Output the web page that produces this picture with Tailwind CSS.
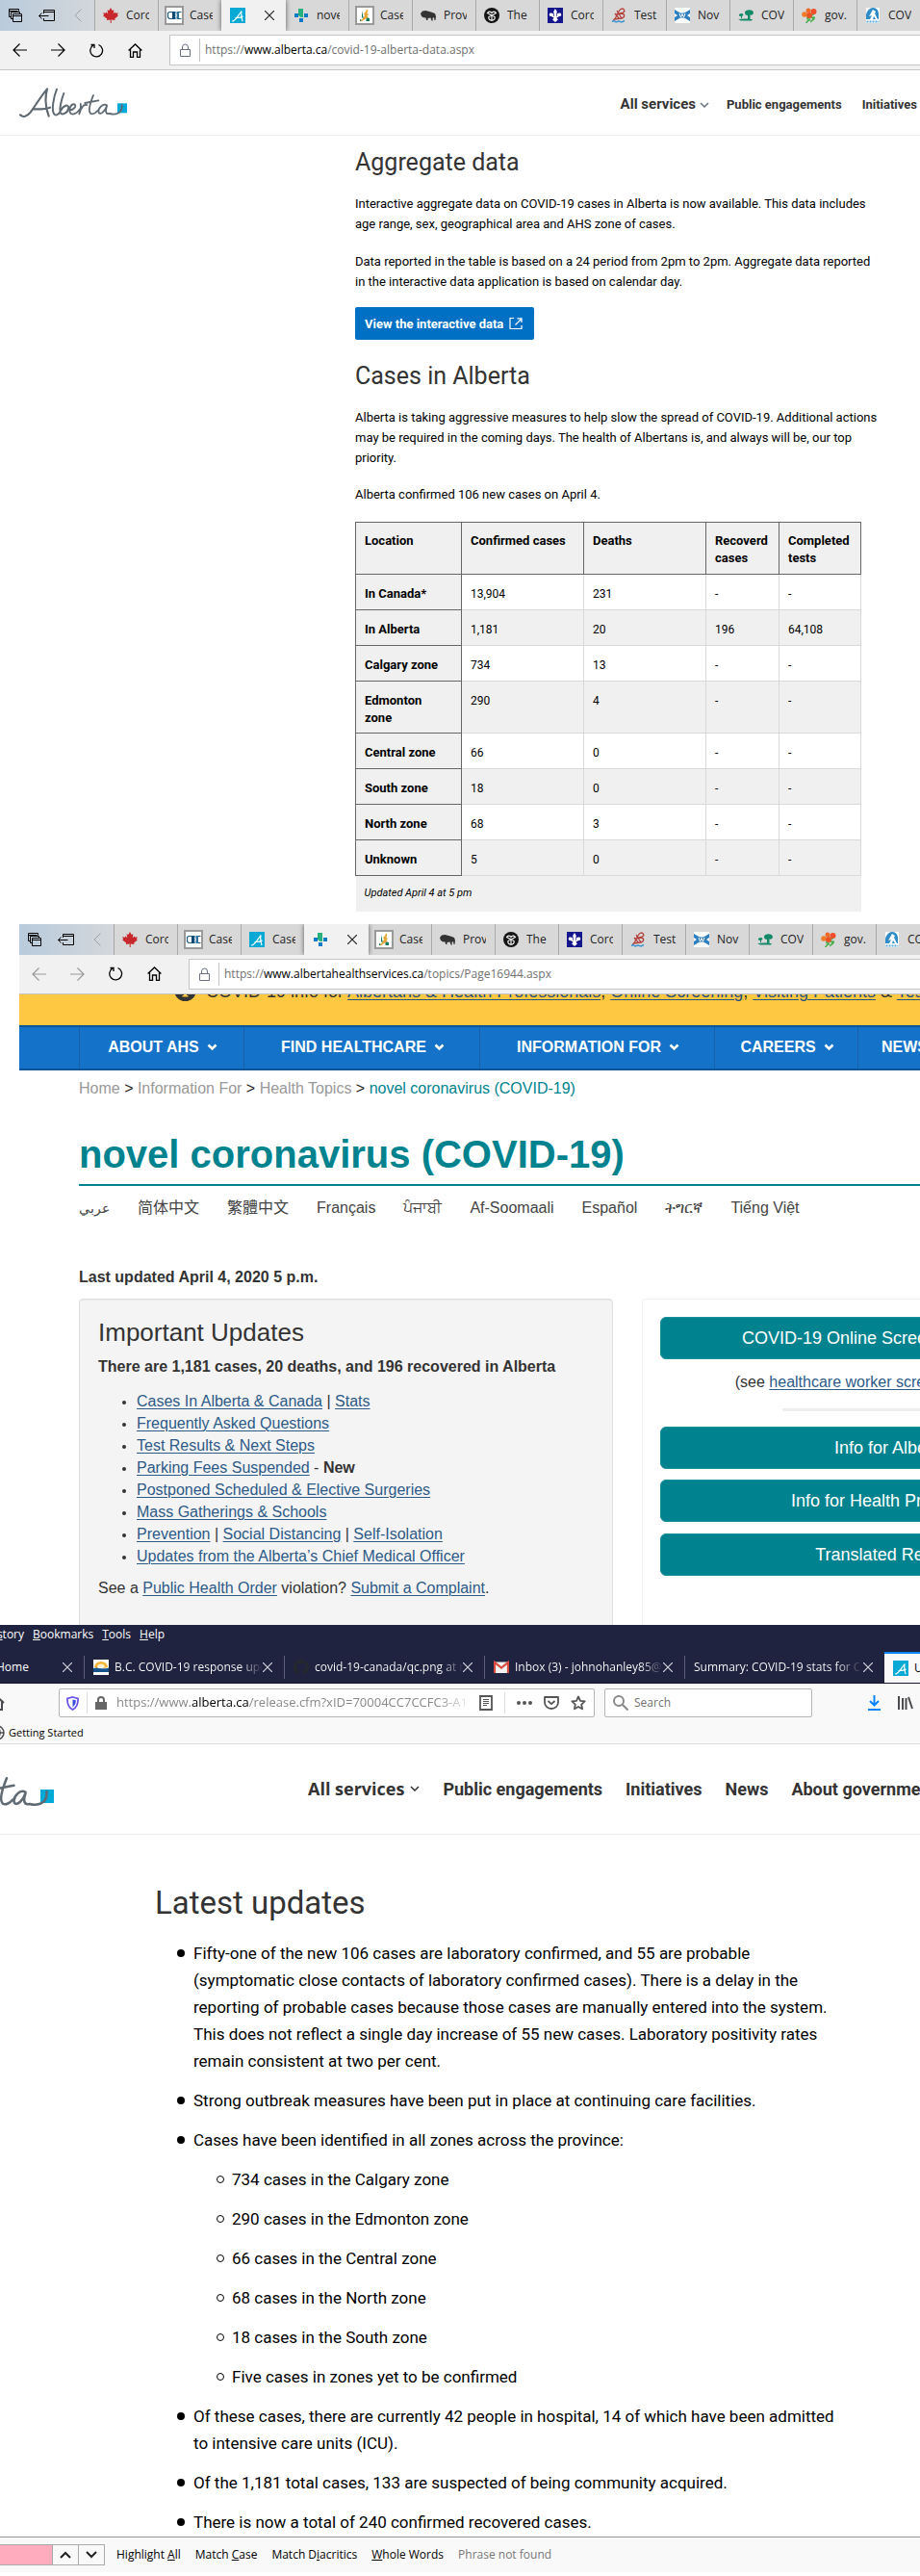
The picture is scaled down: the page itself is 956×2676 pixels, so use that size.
<!DOCTYPE html>
<html lang="en">
<head>
<meta charset="utf-8">
<meta name="viewport" content="width=device-width, initial-scale=1">
<title>Alberta COVID-19 data</title>
<script src="https://cdn.jsdelivr.net/npm/@tailwindcss/browser@4"></script>
</head>
<body class="bg-white text-black overflow-x-hidden">

<svg class="hidden" aria-hidden="true">
  <symbol id="i-stack" viewBox="0 0 14 14"><g fill="none" stroke="currentColor"><path d="M2.5 8.5h-2v-8h10v2M.5 2.5h9M4.500 10.500h-2v-7h9v2"/><path d="M4.500 5.500h9v8h-9zM4.500 7.500h9"/></g></symbol>
  <symbol id="i-aside" viewBox="0 0 17 12"><g fill="none" stroke="currentColor"><path d="M5.500 4V.5h11v11h-11V9M5.500 2.500h11M.5 6.500h10M3.500 3.500l-3 3 3 3"/></g></symbol>
  <symbol id="i-left" viewBox="0 0 8 14"><path d="M7.500.5L1 7l6.500 6.500" fill="none" stroke="currentColor"/></symbol>
  <symbol id="i-back" viewBox="0 0 15 14"><path d="M.8 7H15M7.500.5L1 7l6.500 6.500" fill="none" stroke="currentColor" stroke-width="1.200"/></symbol>
  <symbol id="i-fwd" viewBox="0 0 15 14"><path d="M14.200 7H0M7.500.5L14 7l-6.500 6.500" fill="none" stroke="currentColor" stroke-width="1.200"/></symbol>
  <symbol id="i-reload" viewBox="0 0 15 15"><path d="M9.500 1.500a6.400 6.400 0 1 1-5.500.4M1.500 1.500H5V5" fill="none" stroke="currentColor" stroke-width="1.300"/></symbol>
  <symbol id="i-home" viewBox="0 0 15 15"><path d="M.6 7.500L7.500 1l6.900 6.500M2.500 6v8.300h3V9h4v5.300h3V6" fill="none" stroke="currentColor" stroke-width="1.300"/></symbol>
  <symbol id="i-lock" viewBox="0 0 11 14"><path d="M.5 6.500h10v7H.5zM2.500 6.500V4a3 3 0 0 1 6 0v2.500" fill="none" stroke="currentColor"/></symbol>
  <symbol id="i-x" viewBox="0 0 10 10"><path d="M0 0l10 10M10 0L0 10" fill="none" stroke="currentColor" stroke-width="1.200"/></symbol>
  <symbol id="i-chev" viewBox="0 0 10 6"><path d="M1 1l4 4 4-4" fill="none" stroke="currentColor" stroke-width="1.500"/></symbol>
  <symbol id="i-chevb" viewBox="0 0 11 8"><path d="M1.500 1.500l4 4 4-4" fill="none" stroke="currentColor" stroke-width="2.600"/></symbol>
  <symbol id="f-leaf" viewBox="0 0 16 16"><path d="M8 0l1.700 3 1.700-.8-.6 4 2-1.700.6 1.200 2.400-.4-.8 2.300.8.8-3.600 3 .4 1.600-3.900-.5V16h-1v-3.500l-3.900.5.4-1.600L.2 8.400 1 7.600.2 5.300l2.400.4.600-1.200 2 1.700-.6-4 1.700.8z" fill="#c8282c"/></symbol>
  <symbol id="f-cdc" viewBox="0 0 20 20"><path d="M1 1h18v18H1z" fill="#fff" stroke="#9a9a9a" stroke-width="2"/><path d="M8 6.500H5L3.500 7.500v4.500L5 13.500h3M17.500 6.500H15M15 13.500h2.500" fill="none" stroke="#1d5d86" stroke-width="1.200"/><path d="M8 6h3.500v8H8z" fill="#0c4a78"/><path d="M12.500 6H15v8h-2.500z" fill="#2b6f9b"/><path d="M11 8l1.500 2-1.500 2" fill="none" stroke="#fff" stroke-width=".8"/></symbol>
  <symbol id="f-ab" viewBox="0 0 16 16"><path d="M0 0h16v16H0z" fill="#08a9d4"/><path d="M2 14c3.500.5 5.500-4.500 10-10.500-.6 3-.2 6 1 10.500M5.500 10.500c3 0 6 0 8-1.500" fill="none" stroke="#fff" stroke-width="1.200"/></symbol>
  <symbol id="f-ahs" viewBox="0 0 16 16"><path d="M5 1h5v9H7.500L5 8z" fill="#27b27b"/><path d="M1 6h4v4H1zM11 6h4v4h-4zM6 11h4v4H6z" fill="#0c79c6"/></symbol>
  <symbol id="f-sask" viewBox="0 0 20 20"><path d="M1 1h18v18H1z" fill="#fff" stroke="#9a9a9a" stroke-width="2"/><path d="M7 5v7l2 2zM11.500 12l3.500 1v3h-3.500zM5 14l2 1v1H5z" fill="#14795a"/><path d="M6.500 16C10 13 12 8 12.500 4M9.500 9l2.500-3M9.500 12l4-3.500M8.500 14l4.500-3" fill="none" stroke="#e7a531" stroke-width="1.600"/></symbol>
  <symbol id="f-bison" viewBox="0 0 16 16"><path d="M0 6l2-2.500L5.500 3 11 4.500l4 1.500 1 3-.5 4h-1l-.5-3-1.500 1 .3 2.500h-1.300L10.500 10.500 7.500 11v2H6l-.5-2.500L3 10.200 1 9z" fill="#333"/></symbol>
  <symbol id="f-on" viewBox="0 0 16 16"><circle cx="8" cy="8" r="8" fill="#151515"/><g fill="none" stroke="#fff" stroke-width="1.100"><path d="M8 8L3.500 5.500a2.500 2.500 0 0 1 4.500 0 2.500 2.500 0 0 1 4.500 0L8 8v5a2.600 2.600 0 0 1-3-3.500L8 8l3 1.500A2.600 2.600 0 0 1 8 13"/></g></symbol>
  <symbol id="f-qc" viewBox="0 0 16 16"><path d="M0 0h16v16H0z" fill="#15158c"/><path d="M8 1l1.800 3-1 5h.7c0-3 1.500-4 3.500-3.500s1.500 4-1 3.500L10.500 10H9.400l1.400 2.500L8 15l-2.800-2.500L6.600 10H5.500L4 9c-2.500.5-3-3-1-3.500S6.500 6 6.500 9h.7l-1-5z" fill="#fff"/></symbol>
  <symbol id="f-nb" viewBox="0 0 16 16"><path d="M2 13c4-1 4-10 9-12 3 0 4 3 1 4L5 7l6-1c3 0 4 4 0 5L3 12M6 3l5 8M4 6l4 5" fill="none" stroke="#b4413c" stroke-width="1.300"/><path d="M1 14.500l2-1 2 1.500 3-1 3 1 3-1.500" fill="none" stroke="#3d95cf" stroke-width="1.500"/></symbol>
  <symbol id="f-ns" viewBox="0 0 16 16"><path d="M0 0h16v16H0z" fill="#fff"/><path d="M0 2l6 3.500L10 5.500 16 2v4l-3 2 3 2v4l-6-3.500H6L0 14v-4l3-2-3-2z" fill="#2d7fc0"/><path d="M5 6l1.500 4L8 6.500 9.500 10 11 6" fill="none" stroke="#fff"/></symbol>
  <symbol id="f-pe" viewBox="0 0 16 16"><path d="M7 5c0-3 8-4 9 0 0 2-2 3-3.500 2.500V12h2.500l-1 1.500H3L0 12l6-.5H10V8C8 8 7 7 7 5zM1 7c2-1.500 4-1 4.500.5L4 9v2H3V9L1 8.500z" fill="#148a68"/></symbol>
  <symbol id="f-nl" viewBox="0 0 16 16"><path d="M14 4c1 3-7 4-4 6 2 1 4-1 3 1S9 14 10 15M9 8c-5 3-3 4-1 4 2 1-3 1-3 4" fill="none" stroke="#49ae4d" stroke-width="1.700"/><circle cx="7" cy="3" r="2.500" fill="#ef6b2b"/><circle cx="12.500" cy="4" r="3" fill="#ee4f2a"/><circle cx="3" cy="7" r="2.800" fill="#f07b2b"/><circle cx="8" cy="8" r="3" fill="#e85326"/></symbol>
  <symbol id="f-yk" viewBox="0 0 16 16"><path d="M1 0h14v16H1z" fill="#fff"/><path d="M1 12V7c1-4 4-7 7-7 4 0 6 3 6 7v5z" fill="#2e8bc8"/><path d="M8 2L4 9l3-1-2 4h3l1-3 2 3h2L10 6l1-2z" fill="#fff"/><path d="M1.500 14.500h13" stroke="#5aa7d8" stroke-width="2" stroke-dasharray="2 1"/></symbol>
  <symbol id="logo" viewBox="60 270 336 100">
    <path d="M366 321h30v30h-30z" fill="#00aad8"/>
    <g fill="none" stroke="#5f6a72" stroke-linecap="round" stroke-linejoin="round">
      <path stroke-width="6.500" d="M63 357c8 9 22 5 32-8 16-22 34-52 52-73-6 24-6 58 5 85M102 339c18 0 36 2 54-5"/>
      <path stroke-width="6" d="M177 277c-9 22-18 66-8 78 5 5 13 1 18-6M199 290c-8 20-14 48-11 60 6 10 24 0 26-15 0-11-16-10-24 8"/>
      <path stroke-width="5.500" d="M217 342c14 0 23-14 15-18-12-3-20 20-11 29 9 5 21-4 29-15M251 323c3 10 0 20-4 31 5-16 12-32 24-28"/>
      <path stroke-width="5.500" d="M291 296c-9 22-17 48-9 56 7 5 17-2 22-8M265 320l42-8M333 327c-12-8-29 11-25 23 5 9 20-5 25-21-6 18-3 27 9 24 18 5 40 0 38-27"/>
    </g>
  </symbol>
</svg>

<!-- First window: alberta.ca data page -->
<section class="overflow-hidden" style="font-family:Roboto,sans-serif">
  <div class="flex h-8 overflow-hidden bg-[#d8d8d8] text-[12px] text-[#222]" style="font-family:'Open Sans','Noto Sans',sans-serif">
    <div class="flex w-[98px] shrink-0 items-center bg-linear-to-r from-[#b9cbdc] to-[#d3d7db] pl-[9px] text-black">
      <button aria-label="Tab overview"><svg class="h-3.5 w-3.5"><use href="#i-stack"/></svg></button>
      <button aria-label="Set tabs aside" class="ml-[17px]"><svg class="h-3 w-[17px]"><use href="#i-aside"/></svg></button>
      <button aria-label="Scroll tabs left" class="ml-5 text-gray-400"><svg class="h-3.5 w-2"><use href="#i-left"/></svg></button>
    </div>
    <button class="flex w-[66px] shrink-0 items-center gap-2 border-l border-[#a9a9a9] px-2"><svg class="size-4 shrink-0"><use href="#f-leaf"/></svg><span class="w-6 overflow-hidden text-left">Coro</span></button>
    <button class="flex w-[66px] shrink-0 items-center gap-1.5 border-l border-[#a9a9a9] px-1.5"><svg class="size-5 shrink-0"><use href="#f-cdc"/></svg><span class="w-6 overflow-hidden text-left">Case</span></button>
    <div class="z-10 flex w-[67px] shrink-0 items-center gap-5 bg-[#f1f1f1] px-[9px] shadow-[0_0_5px_#555]"><svg class="size-4 shrink-0"><use href="#f-ab"/></svg><button aria-label="Close tab"><svg class="size-2.5"><use href="#i-x"/></svg></button></div>
    <button class="flex w-[65px] shrink-0 items-center gap-2 px-2"><svg class="size-4 shrink-0"><use href="#f-ahs"/></svg><span class="w-6 overflow-hidden text-left">nove</span></button>
    <button class="flex w-[66px] shrink-0 items-center gap-1.5 border-l border-[#a9a9a9] px-1.5"><svg class="size-5 shrink-0"><use href="#f-sask"/></svg><span class="w-6 overflow-hidden text-left">Case</span></button>
    <button class="flex w-[66px] shrink-0 items-center gap-2 border-l border-[#a9a9a9] px-2"><svg class="size-4 shrink-0"><use href="#f-bison"/></svg><span class="w-6 overflow-hidden text-left">Prov</span></button>
    <button class="flex w-[66px] shrink-0 items-center gap-2 border-l border-[#a9a9a9] px-2"><svg class="size-4 shrink-0"><use href="#f-on"/></svg><span class="w-6 overflow-hidden text-left">The</span></button>
    <button class="flex w-[66px] shrink-0 items-center gap-2 border-l border-[#a9a9a9] px-2"><svg class="size-4 shrink-0"><use href="#f-qc"/></svg><span class="w-6 overflow-hidden text-left">Coro</span></button>
    <button class="flex w-[66px] shrink-0 items-center gap-2 border-l border-[#a9a9a9] px-2"><svg class="size-4 shrink-0"><use href="#f-nb"/></svg><span class="w-6 overflow-hidden text-left">Test</span></button>
    <button class="flex w-[66px] shrink-0 items-center gap-2 border-l border-[#a9a9a9] px-2"><svg class="size-4 shrink-0"><use href="#f-ns"/></svg><span class="w-6 overflow-hidden text-left">Nov</span></button>
    <button class="flex w-[66px] shrink-0 items-center gap-2 border-l border-[#a9a9a9] px-2"><svg class="size-4 shrink-0"><use href="#f-pe"/></svg><span class="w-6 overflow-hidden text-left">COV</span></button>
    <button class="flex w-[66px] shrink-0 items-center gap-2 border-l border-[#a9a9a9] px-2"><svg class="size-4 shrink-0"><use href="#f-nl"/></svg><span class="w-6 overflow-hidden text-left">gov.</span></button>
    <button class="flex w-[66px] shrink-0 items-center gap-2 border-l border-[#a9a9a9] px-2"><svg class="size-4 shrink-0"><use href="#f-yk"/></svg><span class="w-6 overflow-hidden text-left">COV</span></button>
  </div>
  <div class="flex h-[41px] items-center border-b border-[#c5c5c5] bg-[#f1f1f1] pl-[13px]" style="font-family:'Open Sans','Noto Sans',sans-serif">
    <button aria-label="Back"><svg class="h-3.5 w-[15px]"><use href="#i-back"/></svg></button>
    <button aria-label="Forward" class="ml-[25px]"><svg class="h-3.5 w-[15px]"><use href="#i-fwd"/></svg></button>
    <button aria-label="Refresh" class="ml-[25px]"><svg class="size-[15px]"><use href="#i-reload"/></svg></button>
    <button aria-label="Home" class="ml-[25px]"><svg class="size-[15px]"><use href="#i-home"/></svg></button>
    <div class="ml-7 flex h-8 flex-1 items-center border border-r-0 border-[#c5c5c5] bg-white pl-2.5">
      <svg class="h-3.5 w-[11px] text-gray-500"><use href="#i-lock"/></svg>
      <div class="ml-[9px] h-6 border-l border-[#c5c5c5]"></div>
      <div role="textbox" aria-label="Address" tabindex="0" class="ml-[5px] text-[12px] whitespace-nowrap text-[#707070]">https://<span class="text-black">www.alberta.ca</span>/covid-19-alberta-data.aspx</div>
    </div>
  </div>
  <header class="flex h-[68px] items-center border-b border-[#ececec] pl-5">
    <a href="#" aria-label="Alberta home"><svg class="h-[34px] w-28"><use href="#logo"/></svg></a>
    <nav class="ml-auto flex shrink-0 items-baseline pt-1 pr-[3px] text-[13px] font-bold text-[#333]">
      <button class="flex items-center gap-1 text-[15px]">All services <svg class="h-1.5 w-2.5 text-gray-500"><use href="#i-chev"/></svg></button>
      <a href="#" class="ml-[18px]">Public engagements</a>
      <a href="#" class="ml-[21px]">Initiatives</a>
    </nav>
  </header>
  <main class="ml-[369px] w-[526px] pb-[13px] text-[13px] leading-[21px]">
    <h2 class="pt-3 text-[25px] leading-8 text-[#333]">Aggregate data</h2>
    <p class="mt-4 whitespace-nowrap">Interactive aggregate data on COVID-19 cases in Alberta is now available. This data includes<br>age range, sex, geographical area and AHS zone of cases.</p>
    <p class="mt-[18px] whitespace-nowrap">Data reported in the table is based on a 24 period from 2pm to 2pm. Aggregate data reported<br>in the interactive data application is based on calendar day.</p>
    <a href="#" class="mt-4 inline-flex h-[34px] items-center gap-1.5 rounded-xs bg-[#0070c4] pr-3 pl-2.5 text-[13px] font-bold text-white">View the interactive data
      <svg class="h-3 w-3.5" viewBox="0 0 14 12" fill="none" stroke="currentColor"><path d="M5 .5H1v11h12V8M6.500 7.500l6-6M8.500.8H13V5" stroke-width="1.200"/></svg></a>
    <h2 class="mt-[22px] text-[25px] leading-8 text-[#333]">Cases in Alberta</h2>
    <p class="mt-4 whitespace-nowrap">Alberta is taking aggressive measures to help slow the spread of COVID-19. Additional actions<br>may be required in the coming days. The health of Albertans is, and always will be, our top<br>priority.</p>
    <p class="mt-[17px]">Alberta confirmed 106 new cases on April 4.</p>
    <table class="mt-[18px] w-full table-fixed border-collapse text-left align-top text-[12px] leading-[18px] [&_th]:text-[13px]">
      <colgroup><col class="w-[110px]"><col class="w-[127px]"><col class="w-[127px]"><col class="w-[76px]"><col></colgroup>
      <thead><tr class="h-[54px] bg-[#f0f0f0] align-top font-bold">
        <th class="border border-[#666] px-[9px] pt-2.5">Location</th><th class="border border-[#666] px-[9px] pt-2.5">Confirmed cases</th><th class="border border-[#666] px-[9px] pt-2.5">Deaths</th><th class="border border-[#666] px-[9px] pt-2.5">Recoverd cases</th><th class="border border-[#666] px-[9px] pt-2.5">Completed tests</th></tr></thead>
      <tbody class="[&_td]:border [&_td]:border-[#d9d9d9] [&_td]:px-[9px] [&_td]:pt-[11px] [&_th]:border [&_th]:border-[#666] [&_th]:bg-[#f0f0f0] [&_th]:px-[9px] [&_th]:pt-[11px] [&_tr]:h-[37px] [&_tr]:align-top [&_tr:nth-child(even)]:bg-[#f0f0f0]">
        <tr><th>In Canada*</th><td>13,904</td><td>231</td><td>-</td><td>-</td></tr>
        <tr><th>In Alberta</th><td>1,181</td><td>20</td><td>196</td><td>64,108</td></tr>
        <tr><th>Calgary zone</th><td>734</td><td>13</td><td>-</td><td>-</td></tr>
        <tr><th class="pb-1.5">Edmonton<br>zone</th><td>290</td><td>4</td><td>-</td><td>-</td></tr>
        <tr><th>Central zone</th><td>66</td><td>0</td><td>-</td><td>-</td></tr>
        <tr><th>South zone</th><td>18</td><td>0</td><td>-</td><td>-</td></tr>
        <tr><th>North zone</th><td>68</td><td>3</td><td>-</td><td>-</td></tr>
        <tr><th>Unknown</th><td>5</td><td>0</td><td>-</td><td>-</td></tr>
      </tbody>
      <tfoot><tr class="h-[37px] bg-[#f0f0f0]"><td colspan="5" class="border-t border-[#666] px-[9px] text-[11px] italic">Updated April 4 at 5 pm</td></tr></tfoot>
    </table>
  </main>
</section>

<!-- Second window: Alberta Health Services -->
<section class="ml-5 overflow-hidden" style="font-family:'Liberation Sans',Arial,sans-serif">
  <div class="flex h-8 overflow-hidden bg-[#d8d8d8] text-[12px] text-[#222]" style="font-family:'Open Sans','Noto Sans',sans-serif">
    <div class="flex w-[98px] shrink-0 items-center bg-linear-to-r from-[#b9cbdc] to-[#d3d7db] pl-[9px] text-black">
      <button aria-label="Tab overview"><svg class="h-3.5 w-3.5"><use href="#i-stack"/></svg></button>
      <button aria-label="Set tabs aside" class="ml-[17px]"><svg class="h-3 w-[17px]"><use href="#i-aside"/></svg></button>
      <button aria-label="Scroll tabs left" class="ml-5 text-gray-400"><svg class="h-3.5 w-2"><use href="#i-left"/></svg></button>
    </div>
    <button class="flex w-[66px] shrink-0 items-center gap-2 border-l border-[#a9a9a9] px-2"><svg class="size-4 shrink-0"><use href="#f-leaf"/></svg><span class="w-6 overflow-hidden text-left">Coro</span></button>
    <button class="flex w-[66px] shrink-0 items-center gap-1.5 border-l border-[#a9a9a9] px-1.5"><svg class="size-5 shrink-0"><use href="#f-cdc"/></svg><span class="w-6 overflow-hidden text-left">Case</span></button>
    <button class="flex w-[66px] shrink-0 items-center gap-2 border-l border-[#a9a9a9] px-2"><svg class="size-4 shrink-0"><use href="#f-ab"/></svg><span class="w-6 overflow-hidden text-left">Case</span></button>
    <div class="z-10 flex w-[67px] shrink-0 items-center gap-5 bg-[#f1f1f1] px-[9px] shadow-[0_0_5px_#555]"><svg class="size-4 shrink-0"><use href="#f-ahs"/></svg><button aria-label="Close tab"><svg class="size-2.5"><use href="#i-x"/></svg></button></div>
    <button class="flex w-[65px] shrink-0 items-center gap-1.5 px-1.5"><svg class="size-5 shrink-0"><use href="#f-sask"/></svg><span class="w-6 overflow-hidden text-left">Case</span></button>
    <button class="flex w-[66px] shrink-0 items-center gap-2 border-l border-[#a9a9a9] px-2"><svg class="size-4 shrink-0"><use href="#f-bison"/></svg><span class="w-6 overflow-hidden text-left">Prov</span></button>
    <button class="flex w-[66px] shrink-0 items-center gap-2 border-l border-[#a9a9a9] px-2"><svg class="size-4 shrink-0"><use href="#f-on"/></svg><span class="w-6 overflow-hidden text-left">The</span></button>
    <button class="flex w-[66px] shrink-0 items-center gap-2 border-l border-[#a9a9a9] px-2"><svg class="size-4 shrink-0"><use href="#f-qc"/></svg><span class="w-6 overflow-hidden text-left">Coro</span></button>
    <button class="flex w-[66px] shrink-0 items-center gap-2 border-l border-[#a9a9a9] px-2"><svg class="size-4 shrink-0"><use href="#f-nb"/></svg><span class="w-6 overflow-hidden text-left">Test</span></button>
    <button class="flex w-[66px] shrink-0 items-center gap-2 border-l border-[#a9a9a9] px-2"><svg class="size-4 shrink-0"><use href="#f-ns"/></svg><span class="w-6 overflow-hidden text-left">Nov</span></button>
    <button class="flex w-[66px] shrink-0 items-center gap-2 border-l border-[#a9a9a9] px-2"><svg class="size-4 shrink-0"><use href="#f-pe"/></svg><span class="w-6 overflow-hidden text-left">COV</span></button>
    <button class="flex w-[66px] shrink-0 items-center gap-2 border-l border-[#a9a9a9] px-2"><svg class="size-4 shrink-0"><use href="#f-nl"/></svg><span class="w-6 overflow-hidden text-left">gov.</span></button>
    <button class="flex w-[66px] shrink-0 items-center gap-2 border-l border-[#a9a9a9] px-2"><svg class="size-4 shrink-0"><use href="#f-yk"/></svg><span class="w-6 overflow-hidden text-left">COV</span></button>
  </div>
  <div class="flex h-[41px] items-center border-b border-[#c5c5c5] bg-[#f1f1f1] pl-[13px]" style="font-family:'Open Sans','Noto Sans',sans-serif">
    <button aria-label="Back" class="text-[#999]"><svg class="h-3.5 w-[15px]"><use href="#i-back"/></svg></button>
    <button aria-label="Forward" class="ml-[25px] text-[#999]"><svg class="h-3.5 w-[15px]"><use href="#i-fwd"/></svg></button>
    <button aria-label="Refresh" class="ml-[25px]"><svg class="size-[15px]"><use href="#i-reload"/></svg></button>
    <button aria-label="Home" class="ml-[25px]"><svg class="size-[15px]"><use href="#i-home"/></svg></button>
    <div class="ml-7 flex h-8 flex-1 items-center border border-r-0 border-[#c5c5c5] bg-white pl-2.5">
      <svg class="h-3.5 w-[11px] text-gray-500"><use href="#i-lock"/></svg>
      <div class="ml-[9px] h-6 border-l border-[#c5c5c5]"></div>
      <div role="textbox" aria-label="Address" tabindex="0" class="ml-[5px] text-[12px] whitespace-nowrap text-[#707070]">https://<span class="text-black">www.albertahealthservices.ca</span>/topics/Page16944.aspx</div>
    </div>
  </div>
  <div class="flex h-8 items-start overflow-hidden bg-[#ffc843] pl-[161px] text-lg leading-6 text-[#333]">
    <svg class="-mt-4 size-[23px] shrink-0" viewBox="0 0 23 23"><circle cx="11.500" cy="11.500" r="11.500" fill="#333"/><path d="M10 5h3v3h-3zM8.500 10H13v7h1.500v1.500h-6V17H10v-5.500H8.500z" fill="#ffc843"/></svg>
    <p class="-mt-[15px] ml-2.5 whitespace-nowrap">COVID-19 info for <a href="#" class="text-[#2d537d] underline decoration-1 underline-offset-2">Albertans &amp; Health Professionals</a>, <a href="#" class="text-[#2d537d] underline decoration-1 underline-offset-2">Online Screening</a>, <a href="#" class="text-[#2d537d] underline decoration-1 underline-offset-2">Visiting Patients</a> &amp; <a href="#" class="text-[#2d537d] underline decoration-1 underline-offset-2">Testing</a></p>
  </div>
  <nav class="flex h-[47px] border-t-2 border-b-2 border-[#0e5598] bg-[#1473c8] pl-[62px] font-bold text-white text-shadow-[1px_2px_1px_#555] [&_button]:flex [&_button]:shrink-0 [&_button]:items-center [&_button]:justify-center [&_button]:gap-2 [&_button]:border-l [&_button]:border-[#1a60a8] [&_button]:pl-0.5 [&_svg]:h-2 [&_svg]:w-[11px]">
    <button class="w-[171px]">ABOUT AHS <svg><use href="#i-chevb"/></svg></button>
    <button class="w-[245px]">FIND HEALTHCARE <svg><use href="#i-chevb"/></svg></button>
    <button class="w-[244px]">INFORMATION FOR <svg><use href="#i-chevb"/></svg></button>
    <button class="w-[149px]">CAREERS <svg><use href="#i-chevb"/></svg></button>
    <button class="w-[200px]"><span class="mr-auto pl-[22px]">NEWS &amp; EVENTS</span></button>
  </nav>
  <div class="h-[576px] overflow-hidden pl-[62px] text-[#333]">
    <p class="mt-[7px] leading-6 text-[#222]"><a href="#" class="text-[#999]">Home</a> &gt; <a href="#" class="text-[#999]">Information For</a> &gt; <a href="#" class="text-[#999]">Health Topics</a> &gt; <span class="text-[#00838f]">novel coronavirus (COVID-19)</span></p>
    <h1 class="mt-[33px] border-b-2 border-[#00838f] pb-2 text-[40px] leading-[46px] font-bold text-[#00838f]">novel coronavirus (COVID-19)</h1>
    <ul class="mt-[9px] flex h-6 items-baseline gap-[29px] leading-6 whitespace-nowrap text-[#444]">
      <li class="text-sm leading-6"><a href="#" lang="ar">عربي</a></li><li><a href="#" style="font-family:'Noto Sans CJK SC',sans-serif">简体中文</a></li><li><a href="#" style="font-family:'Noto Sans CJK TC',sans-serif">繁體中文</a></li><li><a href="#">Français</a></li><li><a href="#">ਪੰਜਾਬੀ</a></li><li><a href="#">Af-Soomaali</a></li><li><a href="#">Español</a></li><li><a href="#">ትግርኛ</a></li><li><a href="#">Tiếng Việt</a></li>
    </ul>
    <p class="mt-[50px] leading-6 font-bold">Last updated April 4, 2020 5 p.m.</p>
    <div class="mt-2.5 flex gap-[30px]">
      <div class="h-[380px] w-[555px] shrink-0 rounded border border-[#e0e0e0] bg-[#f4f4f4] px-[19px] shadow-[inset_0_1px_1px_rgba(0,0,0,0.05)]">
        <h2 class="mt-[18px] text-[26px] leading-8">Important Updates</h2>
        <p class="mt-2 leading-6 font-bold">There are 1,181 cases, 20 deaths, and 196 recovered in Alberta</p>
        <ul class="mt-3 list-disc pl-10 leading-[23px] marker:text-sm [&_a]:text-[#2d5a87] [&_a]:underline [&_a]:decoration-1 [&_a]:underline-offset-2">
          <li><a href="#">Cases In Alberta &amp; Canada</a> | <a href="#">Stats</a></li>
          <li><a href="#">Frequently Asked Questions</a></li>
          <li><a href="#">Test Results &amp; Next Steps</a></li>
          <li><a href="#">Parking Fees Suspended</a> - <b>New</b></li>
          <li><a href="#">Postponed Scheduled &amp; Elective Surgeries</a></li>
          <li><a href="#">Mass Gatherings &amp; Schools</a></li>
          <li><a href="#">Prevention</a> | <a href="#">Social Distancing</a> | <a href="#">Self-Isolation</a></li>
          <li><a href="#">Updates from the Alberta’s Chief Medical Officer</a></li>
        </ul>
        <p class="mt-2.5 leading-6 [&_a]:text-[#2d5a87] [&_a]:underline [&_a]:decoration-1 [&_a]:underline-offset-2">See a <a href="#">Public Health Order</a> violation? <a href="#">Submit a Complaint</a>.</p>
      </div>
      <div class="flex h-[380px] w-[536px] shrink-0 flex-col rounded border border-[#f2f2f2] px-[18px] pt-[18px] text-center text-lg [&>a]:flex [&>a]:h-11 [&>a]:items-center [&>a]:justify-center [&>a]:rounded-md [&>a]:border [&>a]:border-[#1a909b] [&>a]:bg-[#00838f] [&>a]:text-white">
        <a href="#">COVID-19 Online Screening Assessment</a>
        <p class="mt-3 text-base leading-6">(see <span class="text-[#2d5a87] underline decoration-1 underline-offset-2">healthcare worker screening questionnaire</span>)</p>
        <hr class="mx-auto mt-[15px] h-[3px] w-[244px] border-0 bg-[#eee]">
        <a href="#" class="mt-4">Info for Albertans</a>
        <a href="#" class="mt-[11px]">Info for Health Professionals</a>
        <a href="#" class="mt-3">Translated Resources</a>
      </div>
    </div>
  </div>
</section>

<!-- Third window: news release -->
<section class="overflow-hidden" style="font-family:'Open Sans','Noto Sans',sans-serif">
  <div class="h-[61px] border-b border-[#14162e] bg-[#20233f] text-[12px] text-white">
    <div class="-ml-[17px] flex h-5 items-center gap-[9px] pl-0.5"><button>Hi<u>s</u>tory</button><button><u>B</u>ookmarks</button><button><u>T</u>ools</button><button><u>H</u>elp</button></div>
    <div class="mt-[9px] flex h-[31px] items-center whitespace-nowrap">
      <div class="flex w-[87px] shrink-0 items-center justify-between pr-3"><span class="-ml-1">Home</span><button aria-label="Close tab" class="text-gray-300"><svg class="size-2.5"><use href="#i-x"/></svg></button></div>
      <div class="flex h-6 w-[208px] shrink-0 items-center border-l border-[#5d5f78] pr-3 pl-[9px]">
        <svg class="mr-1.5 size-4 shrink-0" viewBox="0 0 16 16"><path d="M0 0h16v16H0z" fill="#fff"/><path d="M1 8a7 6 0 0 1 14 0l-4 1-3-3-4 3z" fill="#f5b335"/><path d="M4 8a4 3.500 0 0 1 8 0" fill="#fff3cf"/><path d="M0 9c4-2 7 2 16-.5V13H0z" fill="#16528e"/></svg>
        <span class="w-[154px] overflow-hidden bg-linear-to-r from-white from-85% to-transparent bg-clip-text text-transparent">B.C. COVID-19 response update</span><button aria-label="Close tab" class="ml-auto text-gray-300"><svg class="size-2.5"><use href="#i-x"/></svg></button></div>
      <div class="flex h-6 w-[208px] shrink-0 items-center border-l border-[#5d5f78] pr-3 pl-[9px]">
        <svg class="mr-1.5 size-4 shrink-0" viewBox="0 0 16 16"><path d="M8 0a8 8 0 0 0-2.500 15.600v-2.400C3.500 13.500 3 12 2.500 11.500c1 0 1.500 1.500 3 1 0-.5.3-1 .6-1.200C2 10.500 2.500 6 4 5c-.2-.8-.1-1.500.1-2 1 0 1.700.5 2.200.9a8 8 0 0 1 3.500 0c.5-.4 1.200-.9 2.200-.9.2.5.3 1.200.1 2 1.500 1 2 5.500-2.200 6.300.5.500.6 1 .6 2v2.300A8 8 0 0 0 8 0z" fill="#24292e"/></svg>
        <span class="w-[154px] overflow-hidden bg-linear-to-r from-white from-85% to-transparent bg-clip-text text-transparent">covid-19-canada/qc.png at master</span><button aria-label="Close tab" class="ml-auto text-gray-300"><svg class="size-2.5"><use href="#i-x"/></svg></button></div>
      <div class="flex h-6 w-[208px] shrink-0 items-center border-l border-[#5d5f78] pr-3 pl-[9px]">
        <svg class="mr-1.5 size-4 shrink-0" viewBox="0 0 16 16"><path d="M1 2.500h14v11.500H1z" fill="#f2f2f2"/><path d="M1 14V3l7 5.500L15 3v11" fill="none" stroke="#d94b3f" stroke-width="2.200"/></svg>
        <span class="w-[154px] overflow-hidden bg-linear-to-r from-white from-85% to-transparent bg-clip-text text-transparent">Inbox (3) - johnohanley85@gmail</span><button aria-label="Close tab" class="ml-auto text-gray-300"><svg class="size-2.5"><use href="#i-x"/></svg></button></div>
      <div class="flex h-6 w-[208px] shrink-0 items-center border-l border-[#5d5f78] pr-3 pl-[9px]">
        <span class="w-[174px] overflow-hidden bg-linear-to-r from-white from-85% to-transparent bg-clip-text text-transparent">Summary: COVID-19 stats for Canada</span><button aria-label="Close tab" class="ml-auto text-gray-300"><svg class="size-2.5"><use href="#i-x"/></svg></button></div>
      <div class="flex h-8 w-[208px] shrink-0 items-center gap-1.5 border-t-2 border-[#0a84ff] bg-[#f9f9f9] pl-[9px] text-black"><svg class="size-4 shrink-0"><use href="#f-ab"/></svg>Updates</div>
    </div>
  </div>
  <div class="border-b border-[#dcdcdc] bg-[#f9f9f9] text-[12px]">
    <div class="flex h-[41px] items-center">
      <button aria-label="Home" class="-ml-[11px]"><svg class="size-4" viewBox="0 0 16 16" fill="none" stroke="#4a4a4f" stroke-width="2"><path d="M1 8l7-6.500L15 8M3 7v8h3.500v-4h3v4H13V7"/></svg></button>
      <div class="ml-14 flex h-[30px] w-[557px] items-center rounded-xs border border-[#b5b5b5] bg-white text-[#666]">
        <svg class="ml-[7px] h-[15px] w-[13px]" viewBox="0 0 13 15"><path d="M6.500 1L12 2.500c.3 5-.8 9-5.500 11.500C1.800 11.500.7 7.500 1 2.500z" fill="none" stroke="#6a55e8" stroke-width="1.800"/><path d="M6.500 3.500v8C9 9.500 10 7 9.800 4.300z" fill="#3b4fd8"/></svg>
        <div class="ml-2 h-[22px] border-l border-[#ddd]"></div>
        <svg class="ml-2 h-3.5 w-3" viewBox="0 0 12 14"><path d="M0 6h12v8H0z" fill="#666"/><path d="M3 6.500V4a3 3 0 0 1 6 0v2.500" fill="none" stroke="#666" stroke-width="2"/></svg>
        <div role="textbox" aria-label="Address" tabindex="0" class="ml-2.5 w-[370px] overflow-hidden text-[13px] whitespace-nowrap text-[#888] mask-r-from-90%">https://www.<span class="text-black">alberta.ca</span>/release.cfm?xID=70004CC7CCFC3-A1</div>
        <button aria-label="Reader view" class="ml-[7px]"><svg class="h-4 w-3.5" viewBox="0 0 14 16" fill="none" stroke="#555"><path d="M1 1h12v14H1z" stroke-width="1.800"/><path d="M4 4.500h6M4 6.500h6M4 8.500h6M4 10.500h4"/></svg></button>
        <div class="ml-3 h-[22px] border-l border-[#ddd]"></div>
        <button aria-label="Page actions" class="ml-3"><svg class="h-1 w-4" viewBox="0 0 16 4" fill="#555"><circle cx="2" cy="2" r="2"/><circle cx="8" cy="2" r="2"/><circle cx="14" cy="2" r="2"/></svg></button>
        <button aria-label="Save to Pocket" class="ml-3"><svg class="h-3.5 w-4" viewBox="0 0 16 14" fill="none" stroke="#555" stroke-width="1.800"><path d="M1 1h14v5.500a7 6.500 0 0 1-14 0zM4.500 5L8 8.200 11.500 5" stroke-linejoin="round"/></svg></button>
        <button aria-label="Bookmark" class="ml-3"><svg class="size-4" viewBox="0 0 16 16" fill="none" stroke="#555" stroke-width="1.800" stroke-linejoin="round"><path d="M8 1.500l2 4.300 4.700.6-3.500 3.200.9 4.700L8 12l-4.100 2.300.9-4.700L1.300 6.400l4.700-.6z"/></svg></button>
      </div>
      <label class="ml-2.5 flex h-[30px] w-[216px] items-center rounded-xs border border-[#b5b5b5] bg-white pl-2"><svg class="size-4" viewBox="0 0 16 16" fill="none" stroke="#888" stroke-width="2"><circle cx="6" cy="6" r="5"/><path d="M9.500 9.500L15.500 15.500"/></svg><input aria-label="Search" placeholder="Search" class="ml-1.5 w-40 text-[12px] outline-none placeholder:text-[#707070]"></label>
      <button aria-label="Downloads" class="ml-[58px]"><svg class="h-4 w-[13px]" viewBox="0 0 13 16" fill="none" stroke="#0a84ff" stroke-width="2"><path d="M6.500 0v10M2 6l4.500 4.500L11 6M0 15h13"/></svg></button>
      <button aria-label="Library" class="ml-[18px]"><svg class="h-3.5 w-4" viewBox="0 0 16 14" stroke="#4a4a4f" stroke-width="2"><path d="M1 0v14M5 2v12M8.500 2v12M11 1l4 12"/></svg></button>
    </div>
    <button class="flex h-[21px] items-center gap-1 text-[11px]"><svg class="-ml-[11px] size-4" viewBox="0 0 16 16" fill="none" stroke="#4a4a4f" stroke-width="1.500"><circle cx="8" cy="8" r="7"/><path d="M1 8h14M8 1c-4 4-4 10 0 14 4-4 4-10 0-14"/></svg>Getting Started</button>
  </div>
  <div style="font-family:Roboto,sans-serif">
    <header class="flex h-[94px] items-center border-b border-[#ececec]">
      <a href="#" aria-label="Alberta home" class="-ml-[101px] shrink-0"><svg class="h-[47px] w-[157px]"><use href="#logo"/></svg></a>
      <nav class="ml-[264px] flex shrink-0 items-baseline gap-6 text-lg font-bold whitespace-nowrap text-[#333]">
        <button class="flex items-center gap-1.5" style="font-family:'Open Sans',sans-serif">All services <svg class="h-1.5 w-2.5"><use href="#i-chev"/></svg></button>
        <a href="#">Public engagements</a><a href="#">Initiatives</a><a href="#">News</a><a href="#">About government</a>
      </nav>
    </header>
    <main class="h-[729px] overflow-hidden pl-[161px]">
      <h2 class="mt-[49px] text-[33px] leading-[44px] text-[#333]">Latest updates</h2>
      <ul class="mt-4 space-y-[13px] pl-10 text-[17px] leading-7 whitespace-nowrap [&>li]:relative [&>li]:before:absolute [&>li]:before:top-2.5 [&>li]:before:-left-[17px] [&>li]:before:size-2 [&>li]:before:rounded-full [&>li]:before:bg-black">
        <li>Fifty-one of the new 106 cases are laboratory confirmed, and 55 are probable<br>(symptomatic close contacts of laboratory confirmed cases). There is a delay in the<br>reporting of probable cases because those cases are manually entered into the system.<br>This does not reflect a single day increase of 55 new cases. Laboratory positivity rates<br>remain consistent at two per cent.</li>
        <li>Strong outbreak measures have been put in place at continuing care facilities.</li>
        <li>Cases have been identified in all zones across the province:
          <ul class="mt-[13px] space-y-[13px] pl-10 [&>li]:relative [&>li]:before:absolute [&>li]:before:top-2.5 [&>li]:before:-left-4 [&>li]:before:size-2 [&>li]:before:rounded-full [&>li]:before:border [&>li]:before:border-black">
            <li>734 cases in the Calgary zone</li><li>290 cases in the Edmonton zone</li><li>66 cases in the Central zone</li><li>68 cases in the North zone</li><li>18 cases in the South zone</li><li>Five cases in zones yet to be confirmed</li>
          </ul></li>
        <li>Of these cases, there are currently 42 people in hospital, 14 of which have been admitted<br>to intensive care units (ICU).</li>
        <li>Of the 1,181 total cases, 133 are suspected of being community acquired.</li>
        <li>There is now a total of 240 confirmed recovered cases.</li>
      </ul>
    </main>
  </div>
  <div class="mb-1 flex h-[37px] items-center gap-[15px] border-t border-[#999] bg-[#f9f9f9] text-[12px] whitespace-nowrap">
    <div class="-mr-[3px] flex h-[22px]"><input aria-label="Find in page" class="w-[55px] border border-l-0 border-[#aaa] bg-[#ffacbe]">
      <button aria-label="Previous" class="flex w-[27px] items-center justify-center border border-l-0 border-[#aaa]"><svg class="h-2 w-3" viewBox="0 0 12 8"><path d="M1 7l5-5 5 5" fill="none" stroke="#222" stroke-width="2"/></svg></button>
      <button aria-label="Next" class="flex w-[27px] items-center justify-center border border-l-0 border-[#aaa]"><svg class="h-2 w-3" viewBox="0 0 12 8"><path d="M1 1l5 5 5-5" fill="none" stroke="#222" stroke-width="2"/></svg></button></div>
    <button>Highlight <u>A</u>ll</button><button>Match <u>C</u>ase</button><button>Match D<u>i</u>acritics</button><button><u>W</u>hole Words</button><span class="text-[#777]">Phrase not found</span>
  </div>
</section>
</body>
</html>
